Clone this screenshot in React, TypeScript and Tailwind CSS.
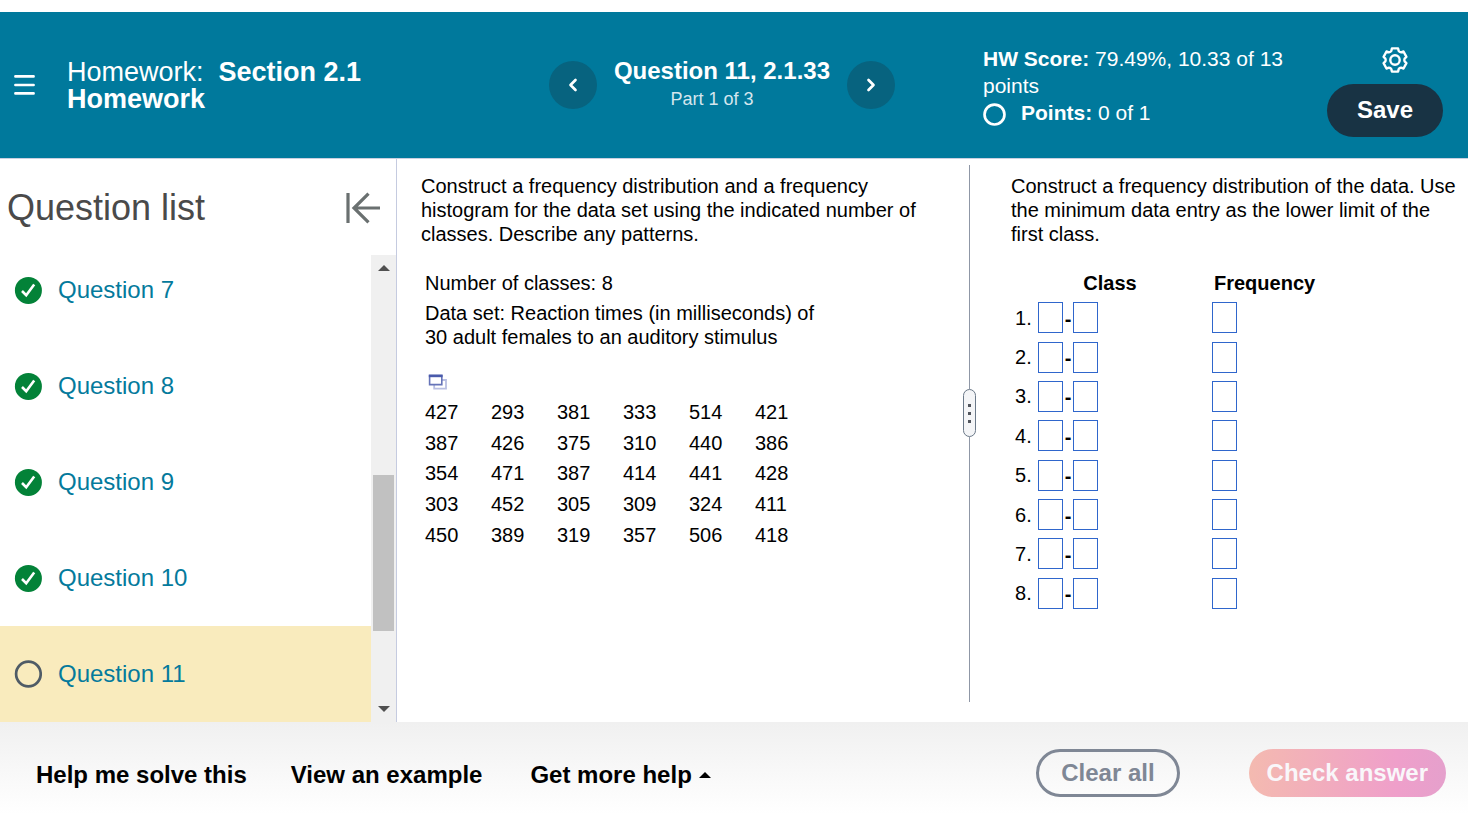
import React, { useState } from 'react';
import { ChevronLeft, ChevronRight } from 'lucide-react';

const questions = [
  { id: 7, done: true },
  { id: 8, done: true },
  { id: 9, done: true },
  { id: 10, done: true },
  { id: 11, done: false },
];

const reactionTimes = [
  [427, 293, 381, 333, 514, 421],
  [387, 426, 375, 310, 440, 386],
  [354, 471, 387, 414, 441, 428],
  [303, 452, 305, 309, 324, 411],
  [450, 389, 319, 357, 506, 418],
];

const classRows = [1, 2, 3, 4, 5, 6, 7, 8];

function GearIcon() {
  return (
    <svg width="28" height="28" viewBox="0 0 28 28" fill="none" stroke="currentColor" strokeWidth="2.4" strokeLinejoin="round">
      <path d="M10.3 5L10.9 2.4H17.1L17.7 5Q18.4 6.2 20 6.3L22.5 5.5L25.4 10.9L23.6 12.6Q23 14 23.6 15.4L25.4 17.1L22.5 22.5L20 21.7Q18.4 21.8 17.7 23L17.1 25.6H10.9L10.3 23Q9.6 21.8 8 21.7L5.5 22.5L2.6 17.1L4.4 15.4Q5 14 4.4 12.6L2.6 10.9L5.5 5.5L8 6.3Q9.6 6.2 10.3 5Z" />
      <circle cx="14" cy="14" r="4.7" />
    </svg>
  );
}

function Header() {
  return (
    <header className="mt-3 flex min-h-[147px] shrink-0 items-center border-b border-[#c9cfe0] bg-[#00799c] text-white">
      <div className="flex flex-1 items-center gap-8 pl-[14px]">
        <button type="button" aria-label="Menu" className="shrink-0">
          <svg width="21" height="22" viewBox="0 0 21 22" stroke="currentColor" strokeWidth="2.6" strokeLinecap="round">
            <path d="M1.4 2.4H19.6M1.4 11H19.6M1.4 19.4H19.6" />
          </svg>
        </button>
        <h1 className="max-w-[300px] pt-[2px] text-[27px] leading-[27px]">
          Homework:&nbsp; <b>Section 2.1 Homework</b>
        </h1>
      </div>

      <nav className="flex shrink-0 items-center gap-[17px]">
        <button type="button" aria-label="Previous question" className="flex size-12 items-center justify-center rounded-full bg-[#07637f]">
          <ChevronLeft size={20} strokeWidth={3.2} />
        </button>
        <div className="text-center">
          <h2 className="text-[24px] leading-[28px] font-bold">Question 11, 2.1.33</h2>
          <p className="pr-5 text-[18px] leading-[28px] text-[#d5e6ee]">Part 1 of 3</p>
        </div>
        <button type="button" aria-label="Next question" className="flex size-12 items-center justify-center rounded-full bg-[#07637f]">
          <ChevronRight size={20} strokeWidth={3.2} />
        </button>
      </nav>

      <div className="ml-[88px] flex w-[485px] shrink-0 items-center justify-between pr-[25px]">
        <div className="w-[310px] text-[21px] leading-[27px]">
          <p>
            <b>HW Score:</b> 79.49%, 10.33 of 13 points
          </p>
          <p className="flex items-end gap-[15px]">
            <svg width="23" height="23" viewBox="0 0 24 24" fill="none" stroke="currentColor" strokeWidth="2.8">
              <circle cx="12" cy="12" r="10.4" />
            </svg>
            <span>
              <b>Points:</b> 0 of 1
            </span>
          </p>
        </div>
        <div className="flex flex-col items-end gap-[10px] pt-3">
          <button type="button" aria-label="Settings" className="mr-[34px]">
            <GearIcon />
          </button>
          <button type="button" className="rounded-full bg-[#183344] px-[30px] pt-[11px] pb-[13px] text-[24px] leading-[29px] font-bold">
            Save
          </button>
        </div>
      </div>
    </header>
  );
}

function StatusIcon({ done }: { done: boolean }) {
  if (done) {
    return (
      <svg width="28" height="28" viewBox="0 0 28 28" fill="none">
        <circle cx="14.4" cy="14.4" r="13.5" fill="#038238" />
        <path d="M8 15l4.2 4.2L20.2 8.4" stroke="#fff" strokeWidth="2.6" />
      </svg>
    );
  }
  return (
    <svg width="28" height="28" viewBox="0 0 28 28" fill="none">
      <circle cx="14.4" cy="14" r="12.3" stroke="#4f5b66" strokeWidth="2.7" />
    </svg>
  );
}

function Sidebar() {
  const [current, setCurrent] = useState(11);

  return (
    <aside className="flex w-[397px] shrink-0 flex-col border-r border-[#c5cbe0]">
      <div className="flex h-24 shrink-0 items-center justify-between pt-[2px] pr-4 pl-[7px]">
        <h2 className="text-[36px] leading-[40px] text-[#4a4a4a]">Question list</h2>
        <button type="button" aria-label="Collapse question list">
          <svg width="34" height="32" viewBox="0 0 34 32" fill="none" stroke="#6a7070" strokeWidth="3.2">
            <path d="M2 1V31M34 16H8M22.5 1.6L8 16L22.5 30.4" />
          </svg>
        </button>
      </div>
      <div className="flex min-h-0 flex-1">
        <ul className="flex flex-1 flex-col justify-end overflow-hidden">
          {questions.map((q) => (
            <li key={q.id} className={`flex h-24 shrink-0 items-center gap-4 pl-[14px] ${q.id === current ? 'bg-[#f9ebbd]' : ''}`}>
              <StatusIcon done={q.done} />
              <a href={`#question-${q.id}`} onClick={() => setCurrent(q.id)} className="text-[24px] leading-[28px] text-[#047a9c]">
                Question {q.id}
              </a>
            </li>
          ))}
        </ul>
        {/* scrollbar */}
        <div className="flex w-[25px] flex-col items-center bg-[#f0f0f0]">
          <div className="flex h-[26px] items-center">
            <svg width="12" height="6" viewBox="0 0 12 6" fill="#505050">
              <path d="M6 0L12 6H0z" />
            </svg>
          </div>
          <div className="grow-[3]" />
          <div className="h-[156px] w-[21px] bg-[#c1c1c1]" />
          <div className="grow" />
          <div className="flex h-[26px] items-center">
            <svg width="12" height="6" viewBox="0 0 12 6" fill="#505050">
              <path d="M0 0H12L6 6z" />
            </svg>
          </div>
        </div>
      </div>
    </aside>
  );
}

function Problem() {
  return (
    <section className="min-w-0 flex-1 overflow-hidden pt-[15px] pr-9 pl-6">
      <p>Construct a frequency distribution and a frequency histogram for the data set using the indicated number of classes. Describe any patterns.</p>
      <div className="mt-[25px] flex max-w-[420px] flex-col gap-[6px] pl-1">
        <p>Number of classes: 8</p>
        <p>Data set: Reaction times (in milliseconds) of 30 adult females to an auditory stimulus</p>
      </div>
      <button type="button" aria-label="Open data set" className="mt-[25px] ml-[7px] block">
        <svg width="20" height="16" viewBox="0 0 20 16" fill="none">
          <path d="M6.2 6H18V14.6H6.2z" fill="#fff" stroke="#b9bfe2" strokeWidth="1.8" />
          <path d="M1.6 1.6H13.8V10.6H1.6z" fill="#fff" stroke="#6674b8" strokeWidth="1.6" />
          <path d="M0.8 0.6H14.6V3.2H0.8z" fill="#4a5aab" />
        </svg>
      </button>
      <table className="mt-[7px] ml-1 h-[153px]">
        <tbody>
          {reactionTimes.map((row, i) => (
            <tr key={i}>
              {row.map((value, j) => (
                <td key={j} className="w-[66px] min-w-[66px] p-0 align-middle">
                  {value}
                </td>
              ))}
            </tr>
          ))}
        </tbody>
      </table>
    </section>
  );
}

function Divider() {
  return (
    <div className="flex w-[13px] shrink-0 flex-col items-center pt-[6px] pb-5">
      <div className="w-px grow-[11] bg-[#8f97a6]" />
      <button type="button" aria-label="Resize panels" className="flex h-12 w-[13px] flex-col items-center justify-center gap-[5px] rounded-full border border-[#6a7888] bg-[#f4f5f7]">
        <span className="size-[3px] bg-[#50545c]" />
        <span className="size-[3px] bg-[#50545c]" />
        <span className="size-[3px] bg-[#50545c]" />
      </button>
      <div className="w-px grow-[13] bg-[#8f97a6]" />
    </div>
  );
}

function AnswerBox({ label }: { label: string }) {
  return <input type="text" aria-label={label} className="h-[31px] w-[25px] shrink-0 border border-[#2f66cc] bg-white px-px text-center outline-none" />;
}

function Answers() {
  return (
    <section className="w-[492px] shrink-0 overflow-hidden pt-[15px] pr-2 pl-[35px]">
      <p>Construct a frequency distribution of the data. Use the minimum data entry as the lower limit of the first class.</p>
      <table className="mt-[22px] h-[345px]">
        <thead>
          <tr className="h-[30px]">
            <td className="w-[27px] p-0" />
            <th className="w-[144px] p-0 text-center">Class</th>
            <th className="p-0 pl-[30px] text-left">
              <span className="pl-[2px]">Frequency</span>
            </th>
          </tr>
        </thead>
        <tbody>
          {classRows.map((n) => (
            <tr key={n}>
              <td className="p-0 pl-1">{n}.</td>
              <td className="p-0">
                <div className="flex items-center">
                  <AnswerBox label={`Class ${n} lower limit`} />
                  <span className="w-[10px] pt-[2px] text-center font-bold">-</span>
                  <AnswerBox label={`Class ${n} upper limit`} />
                </div>
              </td>
              <td className="p-0 pl-[30px]">
                <div className="flex">
                  <AnswerBox label={`Class ${n} frequency`} />
                </div>
              </td>
            </tr>
          ))}
        </tbody>
      </table>
    </section>
  );
}

function Footer() {
  return (
    <footer className="flex h-[92px] shrink-0 items-center justify-between bg-linear-to-b from-[#f0f0f0] to-white pt-[10px] pr-[22px] pl-9 text-[24px] leading-[28px] font-bold">
      <div className="flex items-center gap-11 pt-1">
        <button type="button">Help me solve this</button>
        <button type="button">View an example</button>
        <button type="button" className="ml-1 flex items-center gap-[7px]">
          Get more help
          <svg width="12" height="6" viewBox="0 0 12 6" fill="#000">
            <path d="M6 0L12 6H0z" />
          </svg>
        </button>
      </div>
      <div className="flex items-center gap-[69px]">
        <button type="button" className="h-12 rounded-full border-3 border-[#7f8795] px-[22px] text-[#7f8795]">
          Clear all
        </button>
        <button type="button" className="h-12 rounded-full bg-linear-to-r/srgb from-[#f4bab0] via-[#ef9fca] via-75% to-[#e5a0cc] px-[18px] text-[#f9f7fa]">
          Check answer
        </button>
      </div>
    </footer>
  );
}

export default function App() {
  return (
    <div className="flex h-screen flex-col bg-white font-['Liberation_Sans',Arial,sans-serif] text-black">
      <Header />
      <main className="flex min-h-0 flex-1 text-[20px] leading-[24px]">
        <Sidebar />
        <Problem />
        <Divider />
        <Answers />
      </main>
      <Footer />
    </div>
  );
}
